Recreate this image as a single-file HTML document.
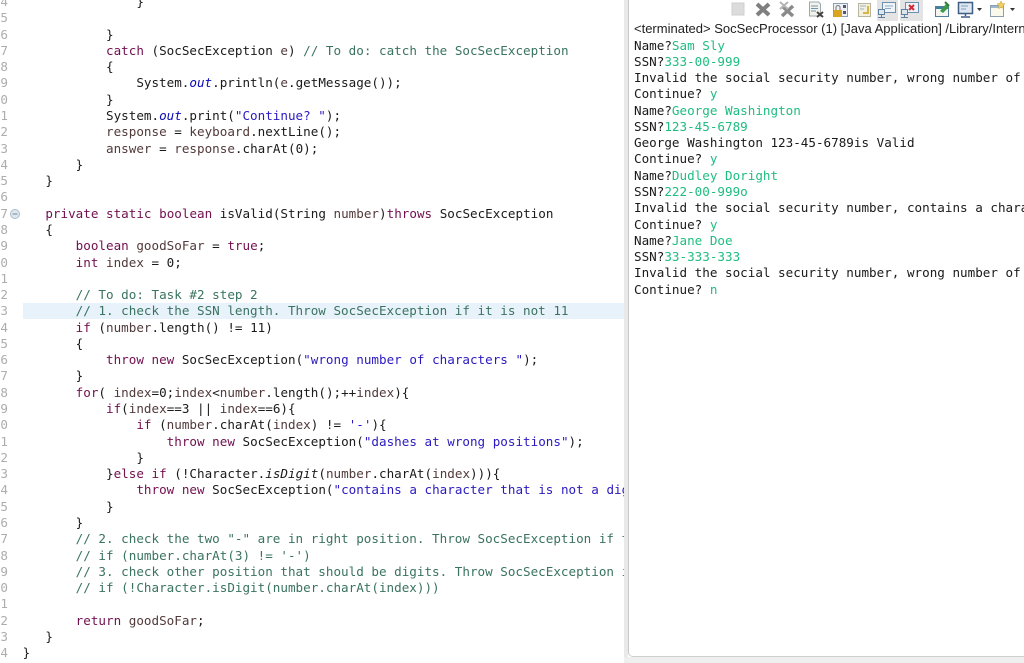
<!DOCTYPE html>
<html><head><meta charset="utf-8"><style>
html,body{margin:0;padding:0;background:#fff}
#root{position:relative;width:1024px;height:663px;overflow:hidden;background:#fff;filter:blur(0.3px)}
pre{margin:0;font-family:"DejaVu Sans Mono","Liberation Mono",monospace;font-size:12.6px;line-height:16.275px;color:#1a1a1a}
#ed{position:absolute;left:0;top:0;width:624px;height:663px;overflow:hidden;background:#fff}
#hl{position:absolute;left:23px;top:303px;width:601px;height:16px;background:#e8f2fb}
#nums{position:absolute;left:-30px;top:-6px;width:38px;text-align:right;color:#adadad}
#code{position:absolute;left:15px;top:-6px}
.k{color:#72104f}.c{color:#3a7360}.s{color:#2a1ac0}.f{color:#0a0ab8;font-style:italic}.v{color:#523a3a}.m{font-style:italic}
#sep{position:absolute;left:624px;top:0;width:4px;height:663px;background:#e9e9e9}
#pan{position:absolute;left:628px;top:0;width:396px;height:657px;background:#fff;border-left:1.5px solid #c9c9c9;border-bottom:1.5px solid #cfcfcf;border-bottom-left-radius:5px;box-sizing:border-box}
#bot{position:absolute;left:624px;top:657px;width:400px;height:6px;background:#efefef}
#title{position:absolute;left:634px;top:21px;font:13px/15px "Liberation Sans",sans-serif;color:#222;white-space:nowrap;width:390px;overflow:hidden}
#con{position:absolute;left:634px;top:37.5px;width:390px;overflow:hidden}
.i{color:#1fbd80}
svg{position:absolute;left:0;top:0}
</style></head><body><div id="root">
<div id="ed"><div id="hl"></div>
<pre id="nums">34
35
36
37
38
39
40
41
42
43
44
45
46
47
48
49
50
51
52
53
54
55
56
57
58
59
60
61
62
63
64
65
66
67
68
69
70
71
72
73
74</pre>
<pre id="code">                }

            }
            <span class="k">catch</span> (SocSecException <span class="v">e</span>) <span class="c">// To do: catch the SocSecException</span>
            {
                System.<span class="f">out</span>.println(<span class="v">e</span>.getMessage());
            }
            System.<span class="f">out</span>.print(<span class="s">"Continue? "</span>);
            <span class="v">response</span> = <span class="v">keyboard</span>.nextLine();
            <span class="v">answer</span> = <span class="v">response</span>.charAt(0);
        }
    }

    <span class="k">private</span> <span class="k">static</span> <span class="k">boolean</span> isValid(String <span class="v">number</span>)<span class="k">throws</span> SocSecException
    {
        <span class="k">boolean</span> <span class="v">goodSoFar</span> = <span class="k">true</span>;
        <span class="k">int</span> <span class="v">index</span> = 0;

        <span class="c">// To do: Task #2 step 2</span>
        <span class="c">// 1. check the SSN length. Throw SocSecException if it is not 11</span>
        <span class="k">if</span> (<span class="v">number</span>.length() != 11)
        {
            <span class="k">throw</span> <span class="k">new</span> SocSecException(<span class="s">"wrong number of characters "</span>);
        }
        <span class="k">for</span>( <span class="v">index</span>=0;<span class="v">index</span>&lt;<span class="v">number</span>.length();++<span class="v">index</span>){
            <span class="k">if</span>(<span class="v">index</span>==3 || <span class="v">index</span>==6){
                <span class="k">if</span> (<span class="v">number</span>.charAt(<span class="v">index</span>) != <span class="s">'-'</span>){
                    <span class="k">throw</span> <span class="k">new</span> SocSecException(<span class="s">"dashes at wrong positions"</span>);
                }
            }<span class="k">else</span> <span class="k">if</span> (!Character.<span class="m">isDigit</span>(<span class="v">number</span>.charAt(<span class="v">index</span>))){
                <span class="k">throw</span> <span class="k">new</span> SocSecException(<span class="s">"contains a character that is not a digit"</span>);
            }
        }
        <span class="c">// 2. check the two "-" are in right position. Throw SocSecException if they are not</span>
        <span class="c">// if (number.charAt(3) != '-')</span>
        <span class="c">// 3. check other position that should be digits. Throw SocSecException if not</span>
        <span class="c">// if (!Character.isDigit(number.charAt(index)))</span>

        <span class="k">return</span> <span class="v">goodSoFar</span>;
    }
 }</pre>
<svg width="30" height="230"><circle cx="15" cy="214" r="4.500" fill="#dfe7ee" stroke="#a9bccb"/><path d="M12.500 214h5" stroke="#6f8ba0" stroke-width="1"/></svg>
</div>
<div id="sep"></div><div id="bot"></div><div id="pan"></div>
<svg width="1024" height="22">
<rect x="732" y="3" width="12" height="12" fill="#dcdcdc" stroke="#cfcfcf"/>
<path d="M757 4l12 11M769 4l-12 11" stroke="#7f7f7f" stroke-width="4"/>
<path d="M782 6l11 10M793 6l-11 10" stroke="#8a8a8a" stroke-width="3.500"/><path d="M780 2l8 7M788 2l-8 7" stroke="#b5b5b5" stroke-width="2"/>
<path d="M809.500 2h9l2 2v12h-11z" fill="#f3f3ea" stroke="#9aa8b4"/><path d="M811 6h7M811 8.500h7M811 11h5" stroke="#6f93b5"/><path d="M817 12l6 5M823 12l-6 5" stroke="#444" stroke-width="2"/>
<rect x="833.500" y="3.500" width="14" height="13" fill="#eef2f6" stroke="#8d9eae"/><rect x="843" y="5" width="3" height="3" fill="#557"/><rect x="843" y="11" width="3" height="3" fill="#557"/><rect x="834" y="10" width="8" height="7" fill="#d9a520"/><path d="M836 10V7.500a2 2 0 0 1 4 0V10" fill="none" stroke="#888" stroke-width="1.200"/>
<rect x="858.500" y="3.500" width="12" height="13" fill="#f3f0dc" stroke="#b8b4a0"/><path d="M860 6h6M860 9h4" stroke="#9db3cc"/><path d="M868 6v7h-5" fill="none" stroke="#d7b548" stroke-width="2"/>
<rect x="877" y="0" width="21" height="21" fill="#e4e4e4"/><rect x="900" y="0" width="23" height="21" fill="#e4e4e4"/>
<rect x="882.500" y="2.500" width="13" height="10" fill="#eef3f8" stroke="#6f8faf"/><path d="M885 6h8M885 8.500h6" stroke="#8ca8c4"/><rect x="878.500" y="9.500" width="6" height="5" fill="#dde6ee" stroke="#5f7f9f"/><path d="M881.500 15v2M878 17.500h7" stroke="#5f7f9f"/>
<rect x="905.500" y="2.500" width="13" height="10" fill="#eef3f8" stroke="#6f8faf"/><path d="M909 5l5 5M914 5l-5 5" stroke="#d5283a" stroke-width="2"/><rect x="901.500" y="9.500" width="6" height="5" fill="#dde6ee" stroke="#5f7f9f"/><path d="M904.500 15v2M901 17.500h7" stroke="#5f7f9f"/>
<rect x="935.500" y="6.500" width="13" height="10" fill="#f5f5f0" stroke="#4f7f9a"/><rect x="936" y="7" width="12" height="2" fill="#3f7fa0"/><path d="M940 11l6-7 3 3-6 6z" fill="#3d9a4a"/><path d="M945 2l4 4" stroke="#2e7d3a" stroke-width="2"/>
<rect x="958.500" y="2.500" width="14" height="11" fill="#dfe7f0" stroke="#3f5f85" stroke-width="1.500"/><path d="M961 6h7M961 9h5" stroke="#7f9cbc"/><path d="M965.500 14v2M961 17h9" stroke="#3f5f85" stroke-width="1.500"/>
<path d="M977 8h5l-2.500 3z" fill="#333"/>
<rect x="990.500" y="5.500" width="13" height="11" fill="#fbf9ec" stroke="#8d9eae"/><rect x="991" y="6" width="12" height="2" fill="#9cb7d2"/><path d="M1001 1l1.200 2.500 2.800.3-2 2 .5 2.800-2.500-1.300-2.500 1.300.5-2.800-2-2 2.800-.3z" fill="#f0cf60" stroke="#c9a030" stroke-width=".5"/>
<path d="M1010 8h5l-2.500 3z" fill="#333"/>
</svg>
<div id="title">&lt;terminated&gt; SocSecProcessor (1) [Java Application] /Library/Internet Plug-Ins/JavaAppletPlugin</div>
<pre id="con">Name?<span class="i">Sam Sly</span>
SSN?<span class="i">333-00-999</span>
Invalid the social security number, wrong number of characters
Continue? <span class="i">y</span>
Name?<span class="i">George Washington</span>
SSN?<span class="i">123-45-6789</span>
George Washington 123-45-6789is Valid
Continue? <span class="i">y</span>
Name?<span class="i">Dudley Doright</span>
SSN?<span class="i">222-00-999o</span>
Invalid the social security number, contains a character that is not a digit
Continue? <span class="i">y</span>
Name?<span class="i">Jane Doe</span>
SSN?<span class="i">33-333-333</span>
Invalid the social security number, wrong number of characters
Continue? <span class="i">n</span></pre>
</div></body></html>
